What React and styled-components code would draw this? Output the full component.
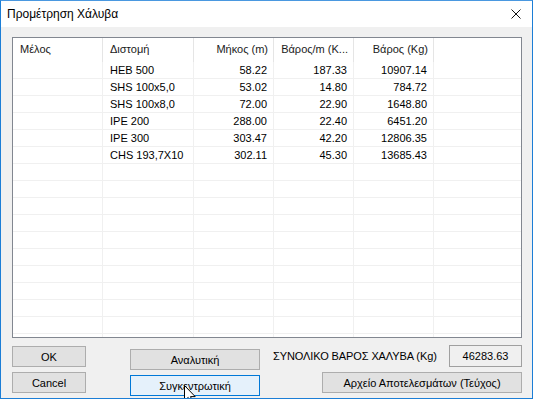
import React from "react";
import styled, { createGlobalStyle } from "styled-components";

const GlobalStyle = createGlobalStyle`
    html, body {
        margin: 0;
        padding: 0;
        background: #f0f0f0;
    }
    * {
        box-sizing: border-box;
    }
`;

// header titles as the list view draws them (the 4th one is cut by the column)
const columns = [
    { key: "member", title: "Μέλος", width: 90, align: "left" },
    { key: "section", title: "Διστομή", width: 91, align: "left" },
    { key: "length", title: "Μήκος (m)", width: 80, align: "right" },
    { key: "weightPerM", title: "Βάρος/m (K...", width: 80, align: "right" },
    { key: "weight", title: "Βάρος (Kg)", width: 80, align: "right" },
];

const rows = [
    { member: "", section: "HEB 500", length: "58.22", weightPerM: "187.33", weight: "10907.14" },
    { member: "", section: "SHS 100x5,0", length: "53.02", weightPerM: "14.80", weight: "784.72" },
    { member: "", section: "SHS 100x8,0", length: "72.00", weightPerM: "22.90", weight: "1648.80" },
    { member: "", section: "IPE 200", length: "288.00", weightPerM: "22.40", weight: "6451.20" },
    { member: "", section: "IPE 300", length: "303.47", weightPerM: "42.20", weight: "12806.35" },
    { member: "", section: "CHS 193,7X10", length: "302.11", weightPerM: "45.30", weight: "13685.43" },
];

const EMPTY_ROWS = 11;

function App() {
    const filled = [...rows, ...Array.from({ length: EMPTY_ROWS }, () => ({}))];
    return (
        <>
            <GlobalStyle />
            <Window>
                <TitleBar>
                    <Title>Προμέτρηση Χάλυβα</Title>
                    <CloseButton>
                        <svg width="10" height="10" viewBox="0 0 10 10">
                            <path d="M0.5 0.5 L9.5 9.5 M9.5 0.5 L0.5 9.5" stroke="#111" strokeWidth="1" />
                        </svg>
                    </CloseButton>
                </TitleBar>
                <Client>
                    <ListBox>
                        <HeaderRow>
                            {columns.map((c) => (
                                <HeaderCell key={c.key} $width={c.width} $align={c.align}>
                                    {c.title}
                                </HeaderCell>
                            ))}
                            <HeaderFiller />
                        </HeaderRow>
                        {filled.map((r, i) => (
                            <Row key={i}>
                                {columns.map((c) => (
                                    <Cell key={c.key} $width={c.width} $align={c.align}>
                                        {r[c.key]}
                                    </Cell>
                                ))}
                                <Filler />
                            </Row>
                        ))}
                    </ListBox>
                    <Footer>
                        <ButtonColumn>
                            <Button $width={74}>OK</Button>
                            <Button $width={74}>Cancel</Button>
                        </ButtonColumn>
                        <ButtonColumn $offset={3} $gapRight={13}>
                            <Button $width={130}>Αναλυτική</Button>
                            <Button $width={130} $hover>
                                Συγκεντρωτική
                            </Button>
                        </ButtonColumn>
                        <TotalColumn>
                            <TotalRow>
                                <TotalLabel>ΣΥΝΟΛΙΚΟ ΒΑΡΟΣ ΧΑΛΥΒΑ (Kg)</TotalLabel>
                                <TotalValue>46283.63</TotalValue>
                            </TotalRow>
                            <Button $width={200}>Αρχείο Αποτελεσμάτων (Τεύχος)</Button>
                        </TotalColumn>
                    </Footer>
                </Client>
                <Cursor width="12" height="20" viewBox="0 0 12 20">
                    <path
                        d="M0.5 0.5 L0.5 16 L4.2 12.4 L6.8 18.6 L9 17.7 L6.5 11.6 L11.2 11.6 Z"
                        fill="#fff"
                        stroke="#000"
                        strokeWidth="1"
                    />
                </Cursor>
            </Window>
        </>
    );
}

export default App;

const Window = styled.div`
    position: relative;
    width: 533px;
    height: 399px;
    border: 1px solid #1c7ed6;
    border-top-color: #4a98e0;
    background: #f0f0f0;
    display: flex;
    flex-direction: column;
    overflow: hidden;
    font-family: "Liberation Sans", Arial, sans-serif;
    color: #000;
`;

const TitleBar = styled.div`
    height: 26px;
    flex: none;
    background: #fff;
    display: flex;
    align-items: center;
    justify-content: space-between;
    padding-left: 6px;
`;

const Title = styled.span`
    font-size: 12px;
    color: #000;
`;

const CloseButton = styled.div`
    width: 30px;
    height: 26px;
    display: flex;
    align-items: center;
    justify-content: center;
    margin-right: 1px;
`;

const Client = styled.div`
    flex: 1;
    padding: 10px 10px 0 11px;
    display: flex;
    flex-direction: column;
`;

const ListBox = styled.div`
    height: 301px;
    border: 1px solid #828790;
    background: #fff;
    overflow: hidden;
    font-size: 11px;
`;

const HeaderRow = styled.div`
    display: flex;
    height: 24px;
`;

const HeaderCell = styled.div`
    width: ${(p) => p.$width}px;
    flex: none;
    border-right: 1px solid #e5e5e5;
    padding: 0 5px 2px 7px;
    line-height: 22px;
    text-align: ${(p) => p.$align};
    white-space: nowrap;
    color: #1a1a1a;
`;

const HeaderFiller = styled.div`
    flex: 1;
`;

const Row = styled.div`
    display: flex;
    height: 17px;
    border-bottom: 1px solid #f0f0f0;
`;

const Cell = styled.div`
    width: ${(p) => p.$width}px;
    flex: none;
    border-right: 1px solid #f0f0f0;
    padding: 0 6px 0 7px;
    line-height: 16px;
    text-align: ${(p) => p.$align};
    white-space: nowrap;
    overflow: hidden;
    color: #000;
`;

const Filler = styled.div`
    flex: 1;
`;

const Footer = styled.div`
    display: flex;
    margin-top: 8px;
    font-size: 11px;
`;

const ButtonColumn = styled.div`
    display: flex;
    flex-direction: column;
    gap: 5px;
    margin-top: ${(p) => p.$offset || 0}px;
    margin-right: ${(p) => p.$gapRight || 44}px;
`;

const Button = styled.div`
    width: ${(p) => p.$width}px;
    height: 21px;
    display: flex;
    align-items: center;
    justify-content: center;
    background: ${(p) => (p.$hover ? "#e5f1fb" : "#e1e1e1")};
    border: 1px solid ${(p) => (p.$hover ? "#0078d7" : "#adadad")};
    font-size: 11px;
    color: #000;
`;

const TotalColumn = styled.div`
    flex: 1;
    display: flex;
    flex-direction: column;
    align-items: flex-end;
    gap: 5px;
    margin-top: -1px;
`;

const TotalRow = styled.div`
    width: 100%;
    display: flex;
    align-items: center;
    justify-content: space-between;
`;

const TotalLabel = styled.span`
    font-size: 11px;
    letter-spacing: -0.1px;
`;

const TotalValue = styled.div`
    width: 73px;
    height: 22px;
    border: 1px solid #a0a0a0;
    background: #f0f0f0;
    display: flex;
    align-items: center;
    justify-content: center;
    font-size: 11px;
`;

const Cursor = styled.svg`
    position: absolute;
    left: 183px;
    top: 384px;
`;
